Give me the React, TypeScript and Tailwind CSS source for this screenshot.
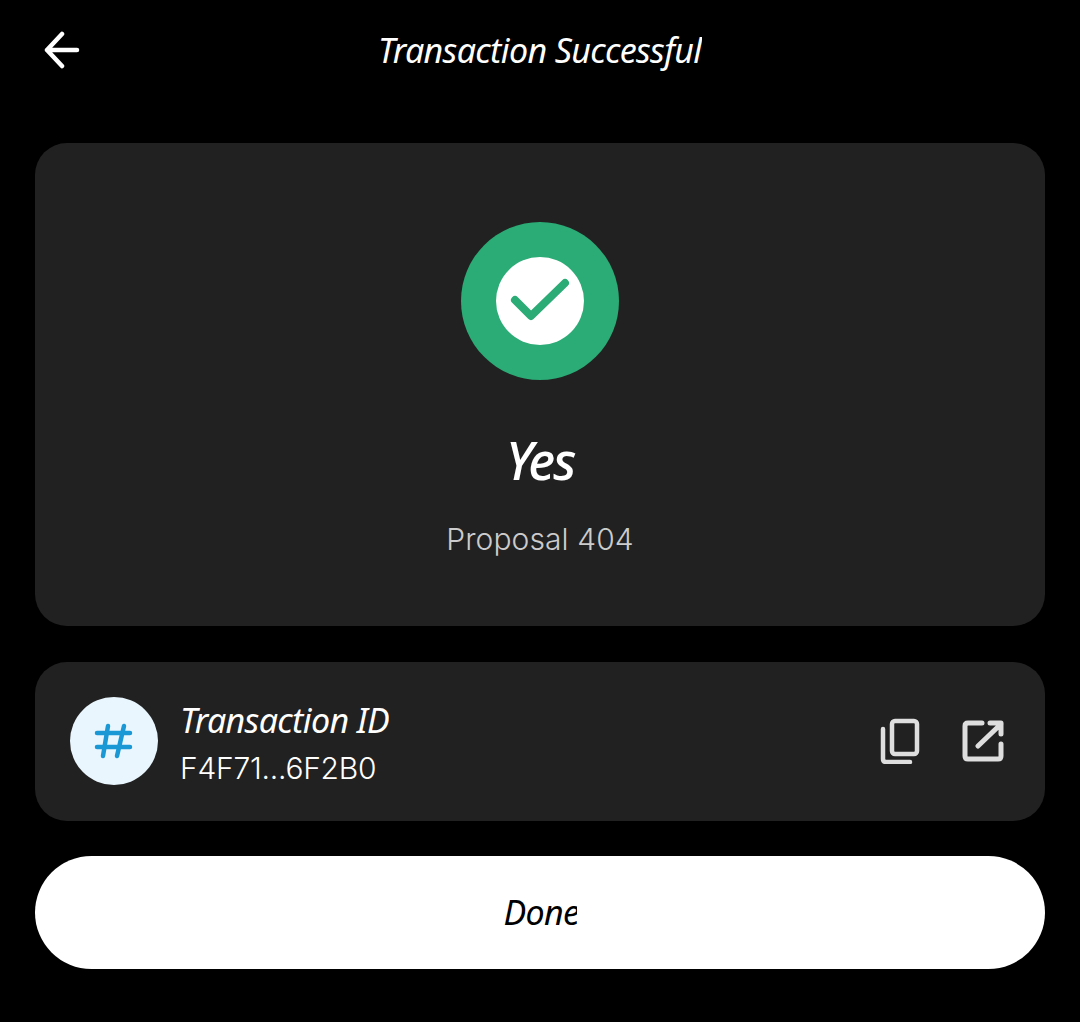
export default function App() {
  return (
    <div className="flex h-[1022px] w-full flex-col bg-black px-[35px] font-['Noto_Sans',sans-serif] text-white">
      <header className="grid h-[100px] shrink-0 grid-cols-[1fr_324px_1fr] items-center">
        <svg className="ml-[9px] h-[40px] w-[38px]" viewBox="0 0 38 40" fill="none" stroke="white" strokeWidth="4.5" strokeLinecap="round" strokeLinejoin="round">
          <path d="M3 20H33M18 4L3 20L18 36" />
        </svg>
        <div className="h-[46px] overflow-hidden whitespace-nowrap text-[34px] leading-[46px] tracking-[-0.64px] italic">
          Transaction Successful
        </div>
      </header>

      <section className="mt-[43px] flex h-[483px] shrink-0 flex-col items-center rounded-[32px] bg-[#212121] pt-[79px]">
        <div className="flex h-[158px] w-[158px] items-center justify-center rounded-full bg-[#2bab75]">
          <div className="flex h-[88px] w-[88px] items-center justify-center rounded-full bg-white">
            <svg className="h-[88px] w-[88px]" viewBox="0 0 88 88" fill="none" stroke="#2bab75" strokeWidth="8" strokeLinecap="round" strokeLinejoin="round">
              <path d="M19 43L35 59L69 26" />
            </svg>
          </div>
        </div>
        <div className="mt-[46px] text-[52px] leading-[68px] font-medium tracking-[-2px] italic">Yes</div>
        <div className="mt-[27px] font-['Inter',sans-serif] text-[30px] leading-[36px] font-light tracking-[0.1px] text-[#cccccc]">Proposal 404</div>
      </section>

      <section className="mt-[36px] flex h-[159px] shrink-0 items-center rounded-[32px] bg-[#212121] pr-[41px] pb-[1px] pl-[35px]">
        <div className="flex h-[88px] w-[88px] shrink-0 items-center justify-center rounded-full bg-[#e9f6fd]">
          <svg className="h-[40px] w-[44px]" viewBox="0 0 44 40" fill="none" stroke="#1a98d5" strokeWidth="4.5" strokeLinecap="round">
            <path d="M5 12H38M5 26H38M16 5L11 35M32 5L25 35" />
          </svg>
        </div>
        <div className="ml-[22px] flex flex-1 flex-col pt-[3px]">
          <div className="h-[46px] w-[209px] overflow-hidden whitespace-nowrap text-[34px] leading-[46px] tracking-[-0.64px] italic">Transaction ID</div>
          <div className="mt-[5px] font-['Inter',sans-serif] text-[30px] leading-[40px] font-light tracking-[-0.25px]">F4F71...6F2B0</div>
        </div>
        <div className="flex items-center gap-[42px]">
          <svg className="h-[46px] w-[40px]" viewBox="0 0 40 46" fill="none" stroke="#dedede" strokeWidth="4.5" strokeLinecap="round" strokeLinejoin="round">
            <path d="M3 11V41C3 43 4 44 6 44H30" />
            <rect x="12" y="3" width="25" height="33" rx="3" />
          </svg>
          <svg className="h-[42px] w-[42px]" viewBox="0 0 42 42" fill="none" stroke="#dedede" strokeWidth="5" strokeLinecap="round" strokeLinejoin="round">
            <path d="M20 3H6C4 3 3 4 3 6V36C3 38 4 39 6 39H36C38 39 39 38 39 36V24" />
            <path d="M16 26L39 4M28 3H39V14" />
          </svg>
        </div>
      </section>

      <button className="mt-[35px] flex h-[113px] shrink-0 items-center justify-center rounded-full bg-white pb-[2px] text-black">
        <span className="h-[46px] w-[73px] overflow-hidden whitespace-nowrap text-[34px] leading-[46px] tracking-[-0.64px] italic">Done</span>
      </button>
    </div>
  );
}
